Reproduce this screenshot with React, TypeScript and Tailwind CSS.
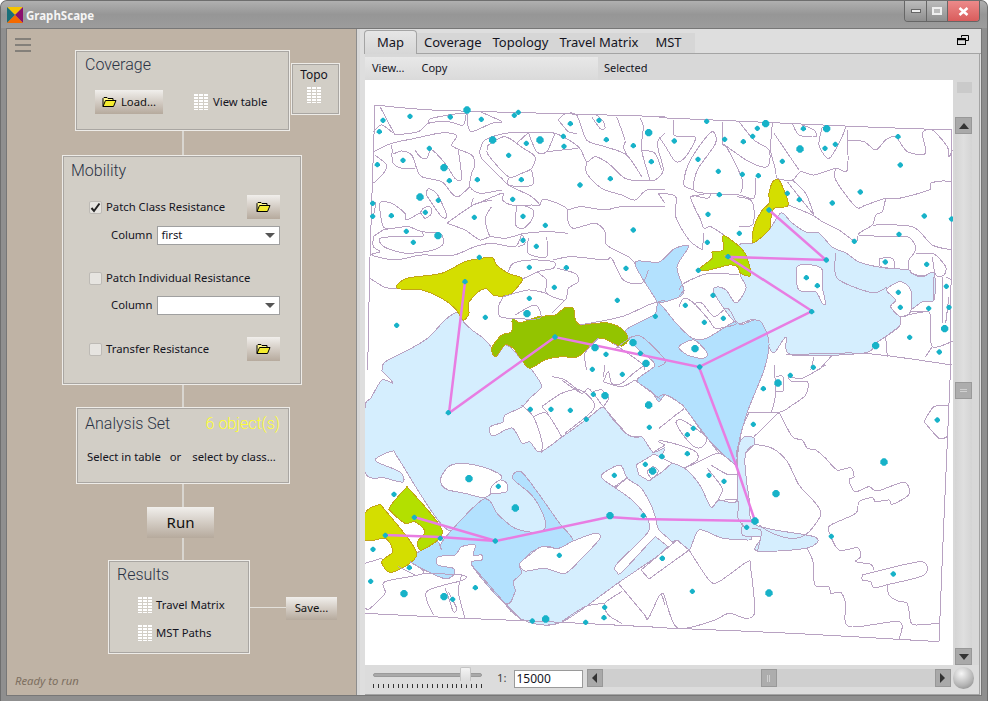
const Z7 = 'translate(366 90) scale(0.33333)'
const Z8 = 'translate(660 90) scale(0.33333)'
const Z9 = 'translate(366 365) scale(0.33333)'
const Z10 = 'translate(660 365) scale(0.33333)'

const lines7 = [
  '30,45 200,60 550,70 900,80', '30,45 22,280 15,500 8,840', '45,50 90,135', '25,125 50,105 85,130',
  '90,135 160,125 190,100 250,95 295,105 305,60', '190,100 200,85 300,70 307,100 320,125 380,100 410,95 345,65',
  '25,185 80,160 150,145 220,130 260,130 275,140 260,165 280,178 320,195 330,225 320,250 315,290 345,310 410,300',
  '80,165 85,190 110,183 140,195 155,235 170,260 230,275 260,310 280,320 315,290', '30,195 65,225 55,250 25,280',
  '80,190 85,220 110,235 150,235', '150,180 165,200 185,205 200,180 240,220 270,265 290,265 280,180',
  '345,180 360,150 420,130 490,128 570,130 640,170 665,215 690,200 730,220 780,265 830,272 870,270 895,240 880,180 880,150 900,130',
  '345,180 350,205 410,265 430,285 500,320 525,345', '368,175 370,195 430,260 470,250 500,235 510,200 475,175 420,140 370,165 368,175',
  '490,128 515,185 545,185 570,130', '455,160 490,128', '545,185 640,175', '430,265 430,285 480,290 505,280 500,240',
  '665,215 665,250 710,295 770,315 810,330 845,300 900,300', '580,90 600,72 635,75 665,150 720,170 785,195 830,260', '580,90 610,125 635,130',
  '755,80 780,150 775,170 785,195', '825,85 835,110 830,180 855,270', '830,180 870,190 890,240', '680,80 705,115 720,115 715,95 695,75',
  '325,325 325,345 410,310 412,330 440,345 500,345 525,345 530,330 550,330 605,355 608,390 625,415 690,400 720,425 725,465 790,500 810,520',
  '608,360 650,350 720,360 770,350 900,350', '880,310 900,340', '245,400 325,345 380,330', '245,400 300,420 345,450 375,440 420,445 460,435 480,430 550,425 610,430',
  '380,350 362,380 365,415 375,440', '455,345 452,405 475,415 500,390 505,360 470,345', '190,295 215,310 245,375 230,380 185,315 190,295',
  '165,370 175,355 195,350 200,370 180,385 165,370 125,390 120,370 80,340 45,340 55,410 85,415',
  '25,440 55,420 85,415 130,410 170,425 225,430 235,460 205,480 130,490 80,480 50,465 45,445 90,440 170,440 170,425',
  '25,440 25,470 45,485 20,495 90,510 170,495 260,497 330,470 380,460 450,470 470,435 480,460 460,470', '490,445 490,490 545,500 545,440',
  '15,565 60,592 95,595', '430,545 445,520 500,510 565,515 565,535 520,545 545,570 545,610 600,630 610,595 640,575 630,550 575,535',
  '565,510 620,500 720,510 740,505 775,570 830,580 850,540', '472,567 520,545', '415,620 400,650 405,680 443,685 525,685 510,645 450,675',
  '415,620 490,600 545,610', '600,630 560,670', '645,705 770,680 850,645 900,630', '790,745 830,740 900,810 880,830', '745,760 830,820 840,840', '745,780 800,740',
  '20,335 32,340 25,380', '700,745 660,790 665,840',
]
const lines8 = [
  '0,83 320,97 600,110 880,120', '878,120 875,840', '0,140 20,170 50,215 80,200 110,145 85,140 45,135 45,90',
  '105,300 75,285 85,230 120,170 160,125 170,160 115,240 105,300 145,310 240,315 285,325 290,265', '190,95 190,160 205,175 250,270 245,310',
  '190,160 270,215 325,230 330,180 285,150 240,95', '340,100 335,180 350,240 355,265 400,270 425,245 465,255 530,235 565,240 565,120',
  '345,130 420,240', '400,100 420,135 470,140 465,120 430,105', '490,110 480,165 510,205 545,150 560,110',
  '565,150 615,155 650,180 680,150 710,140 745,185 800,190 790,130 820,120 865,170 870,200 880,180',
  '530,235 530,270 590,350 620,345 680,325 720,325 810,300 815,280 850,273 880,275',
  '680,325 670,365 650,375 640,405 600,430 590,455 540,420 490,395 460,375 400,350 388,345', '640,405 760,410 820,465 880,480',
  '600,435 680,440 745,440 770,470 765,490 750,510 750,540 775,555 805,555', '770,490 810,490 830,495 860,530 855,555 830,555 820,500',
  '385,275 420,320 465,375', '400,270 440,310 465,375', '0,310 50,320 50,380 90,450 130,480', '95,320 150,310 145,325 95,320 125,390 135,415 155,410 195,435',
  '240,410 280,405 285,360 275,330 235,320', '130,480 135,430', '660,505 700,505 705,535 665,530 660,505', '530,490 535,565 640,608 685,590',
  '825,630 825,560', '850,560 850,700', '860,560 880,570', '870,620 860,700', '725,680 800,665 815,680 820,770 890,750', '755,665 800,665', '680,740 685,800', '680,740 720,710', '820,770 800,800',
  '380,795 615,790 880,825', '465,800 455,840', '520,795 480,840', '60,650 75,625 105,640 150,690 170,715 225,705 230,695 205,655 165,680 130,640 105,640',
  '60,600 75,580 150,550 240,555', '60,620 75,600',
]
const lines9 = [
  '0,745 300,760 590,772 900,788', '470,120 505,155 530,225 530,265', '505,155 545,145 590,215', '530,125 590,85 645,75 685,110 680,140 600,205',
  '550,145 530,125', '590,45 650,85 670,70 700,105 715,125 790,210 830,215', '685,80 710,75 730,100 715,125', '560,35 600,45 650,85',
  '715,50 730,20 740,55 770,55 805,25 840,0', '715,50 770,65 810,45', '810,45 890,105', '720,0 715,35', '880,230 900,240',
  '845,320 865,305 880,320 860,340 845,320', '860,265 900,240',
  '420,715 470,765', '760,655 835,745 850,760 885,690 900,720', '770,680 720,715 730,750 770,775', '590,770 660,725 720,715',
  '135,590 175,625 60,650 60,685 15,730 0,730', '0,595 50,580', '175,625 290,630 295,645 185,680 205,750', '290,630 280,680 300,760', '250,680 275,730 265,740 250,695 240,670',
  '320,600 420,715', '100,605 150,630', '750,370 790,335',
]
const lines10 = [
  '0,788 400,805 840,830', '875,0 855,460 840,830', '345,0 350,85 338,140', '270,142 360,142 400,120 440,90 445,50 400,50 390,35 430,40 500,0', '350,35 372,35 372,78 350,78',
  '270,142 250,190 237,260 232,300', '360,142 285,215',
  '360,142 400,215 430,225 445,250 470,255 500,280 535,315 575,308 585,335 570,345 588,380 630,365 655,378 735,352 750,388 700,418 690,405 650,410 640,398 600,410 590,445 515,480 510,500 540,555 595,548 605,575 590,590 635,598 645,615',
  '610,630 785,590 795,630 690,658 645,668 635,650 610,645 610,630', '685,660 690,690 720,710 745,715 755,770 770,780 840,775',
  '445,550 462,590 468,660 510,665 515,685 545,682 560,715 570,785 720,770 720,825', '795,170 825,125 870,122', '795,170 840,220 865,215',
  '258,265 285,240 340,250 385,290 420,360 470,415 485,450 445,505 400,520 340,505 300,480', '0,95 20,90 75,125 50,150 0,190',
  '50,170 70,165 140,215 130,245 105,245 65,200 50,170', '0,225 60,240 110,260 115,285 75,310 130,285 180,265 230,300', '75,125 180,265', '155,300 205,328 235,328',
  '145,310 190,370 180,405 235,405 237,460 260,490', '90,555 150,645 180,650 265,590 275,610 287,740 260,760 210,745 160,768 55,788 15,690 5,690', '90,555 60,578', '250,475 250,510 280,515', '280,490 305,495 305,520 295,558',
]

const dots7 = {
  big: [[306,60],[165,321],[237,233],[219,437],[383,150],[525,150],[486,671],[851,128],[804,758],[843,820],[690,773]],
  small: [[43,125],[37,224],[114,211],[253,272],[337,269],[431,196],[469,269],[443,328],[474,379],[474,451],[604,533],[616,101],[724,149],[805,167],[859,215],[736,266],[645,285],[597,169],[805,420],[95,706],[783,535],[723,793],[54,91],[135,79],[256,81],[349,88],[448,76],[460,67],[484,160],[595,139],[702,91],[193,175],[220,331],[181,367],[23,340],[23,379],[79,377],[124,424],[145,457],[328,382],[541,406],[514,469],[343,502],[493,532],[568,592],[493,625],[757,631],[871,679],[361,682],[826,790],[300,575],[570,741]],
}
const dots8 = {
  big: [[320,101],[503,116],[423,177],[857,716],[650,767],[108,776]],
  small: [[143,94],[295,115],[433,116],[717,140],[46,153],[197,148],[253,155],[281,139],[529,163],[498,175],[117,208],[370,214],[724,225],[178,244],[250,253],[298,257],[604,306],[181,314],[385,310],[421,329],[520,339],[147,373],[330,360],[796,378],[878,387],[241,430],[720,433],[586,454],[145,457],[207,500],[118,541],[502,510],[679,516],[803,523],[442,563],[475,587],[862,589],[718,607],[162,616],[79,646],[724,652],[809,655],[870,652],[458,665],[136,697],[193,685],[752,742],[841,786]],
}
const dots9 = {
  big: [[720,92],[851,120],[863,318],[312,341],[451,429],[735,452],[117,686],[237,695],[542,762]],
  small: [[682,13],[772,28],[685,88],[496,133],[558,133],[616,136],[664,163],[853,187],[891,275],[841,298],[748,331],[400,364],[87,388],[148,457],[61,511],[226,520],[391,528],[835,452],[583,571],[892,580],[24,553],[133,608],[17,649],[263,703],[331,668],[719,727],[717,758],[502,768],[662,772],[250,143]],
}
const dots10 = {
  big: [[357,54],[675,291],[351,386],[288,468],[330,684]],
  small: [[122,6],[463,7],[394,31],[313,71],[283,178],[835,165],[103,190],[85,209],[85,266],[8,274],[150,331],[195,349],[263,487],[517,514],[10,580],[703,627],[100,679]],
}

// catmull-rom through the hand read points, reference outlines are curvy
const smooth = (pts: string, closed?: boolean) => {
  const p = pts.split(' ').map((s) => s.split(',').map(Number))
  const n = p.length
  const at = (i: number) => (closed ? p[(i + n) % n] : p[Math.max(0, Math.min(n - 1, i))])
  let d = `M${p[0][0]} ${p[0][1]}`
  const k = 1 / 7
  for (let i = 0; i < (closed ? n : n - 1); i++) {
    const a = at(i - 1), b = at(i), c = at(i + 1), e = at(i + 2)
    d += `C${b[0] + (c[0] - a[0]) * k} ${b[1] + (c[1] - a[1]) * k} ${c[0] - (e[0] - b[0]) * k} ${c[1] - (e[1] - b[1]) * k} ${c[0]} ${c[1]}`
  }
  return closed ? d + 'Z' : d
}

const Lines = ({ t, pts }: { t: string, pts: string[] }) => (
  <g transform={t} fill="none" stroke="#b8a2c2" strokeWidth="1" shapeRendering="crispEdges">
    {pts.map((p, i) => <path key={i} d={smooth(p)} vectorEffect="non-scaling-stroke" />)}
  </g>
)

const Area = ({ t, fill, pts, stroke = '#b8a2c2' }: { t?: string, fill: string, pts: string, stroke?: string }) => (
  <path transform={t} d={smooth(pts, true)} fill={fill} stroke={stroke} strokeWidth="1" vectorEffect="non-scaling-stroke" shapeRendering="crispEdges" />
)

const Dots = ({ t, d }: { t: string, d: { big: number[][], small: number[][] } }) => (
  <g transform={t} fill="#17b2c8">
    {d.big.map(([x, y], i) => <path key={i} d={`M${x - 4} ${y - 11}H${x + 4}L${x + 11} ${y - 4}V${y + 4}L${x + 4} ${y + 11}H${x - 4}L${x - 11} ${y + 4}V${y - 4}Z`} />)}
    {d.small.map(([x, y], i) => <path key={i} d={`M${x - 2} ${y - 8}H${x + 2}L${x + 8} ${y - 2}V${y + 2}L${x + 2} ${y + 8}H${x - 2}L${x - 8} ${y + 2}V${y - 2}Z`} />)}
  </g>
)

const MapDrawing = () => (
  <svg width="588" height="585" viewBox="366 80 588 585" className="block">
    <Area fill="#d5eefe" pts="366,408 372,398 383,380 394,383 384,372 383,370 386,362 409,350 429,338 446,320 459,312 463,320 473,330 484,338 493,348 497,357 506,345 514,350 523,360 529,365 541,382 542,388 531,398 523,407 506,415 504,422 491,427 494,436 513,428 523,443 531,442 541,452 563,437 580,425 593,415 604,407 612,417 629,435 643,437 654,452 666,448 660,463 673,463 685,468 693,475 702,487 712,507 720,500 738,500 738,452 745,437 755,438 755,445 747,453 746,465 750,498 757,525 816,537 808,548 758,551 762,538 753,537 750,540 723,538 700,530 690,550 677,540 660,555 619,583 563,622 529,622 506,603 506,565 485,530 446,528 399,458 394,451 379,457 378,462 401,472 404,482 386,478 366,472" />
    <Area fill="#d5eefe" pts="740,245 754,243 770,230 782,213 793,223 807,232 820,233 833,247 847,253 860,262 880,267 910,270 912,273 923,277 935,273 935,300 923,302 912,310 902,317 900,327 877,343 865,353 793,355 787,337 775,353 768,343 755,320 737,323 715,293 718,287 727,290 737,303 747,288 742,277 740,267" />
    <Area fill="#b3e1fe" pts="636,263 660,262 675,249 690,246 678,267 685,290 680,297 660,303 656,298" />
    <Area fill="#b3e1fe" pts="626,332 641,322 656,314 660,303 677,323 693,338 708,338 735,322 742,325 755,320 763,323 770,343 765,370 748,413 738,450 737,465 707,437 685,407 667,395 660,402 653,392 638,380 656,365 640,350" />
    <Area t={Z9} fill="#b3e1fe" pts="442,340 468,320 520,385 580,470 625,527 590,555 550,545 500,560 465,600 470,625 445,650 450,680 420,715 320,600 350,585 350,570 325,570 330,540 290,545 270,570 220,575 218,600 265,610 265,630 235,640 135,590 155,565 215,530 230,555 235,525 355,403 400,450 450,490 510,502 540,490 535,450 500,390" />
    <Area t={Z9} fill="#fff" pts="227,340 250,305 290,295 350,305 400,325 410,340 380,365 378,385 355,398 300,385 250,375 230,360" />
    <Area t={Z9} fill="#fff" pts="380,365 405,345 425,355 425,380 378,385" />
    <Area t={Z9} fill="#fff" pts="465,595 500,565 530,545 580,550 625,528 690,505 705,520 650,580 600,625 540,610 480,618" />
    <Area fill="#fff" pts="602,476 621,465 628,478 642,488 653,507 657,520 660,530 673,542 670,547 658,538 653,540 623,572 618,572 617,565 642,540 650,530 648,518 633,500 615,487" />
    <polyline points="615,487 628,478" fill="none" stroke="#b8a2c2" shapeRendering="crispEdges" />
    <polygon points="642,570 678,540 690,550 650,579" fill="#fff" stroke="#b8a2c2" shapeRendering="crispEdges" />
    <polygon points="637,465 655,454 673,463 663,472 650,481 640,475" fill="#fff" stroke="#b8a2c2" shapeRendering="crispEdges" />
    <Area t={Z8} fill="#fff" pts="415,530 460,525 490,540 490,590 500,640 490,640 470,605 430,605 415,590" />
    <Area t={Z8} fill="#fff" pts="685,595 725,575 755,600 755,665 725,680 695,650 710,630 685,605" />
    <Area t={Z8} fill="#fff" pts="60,770 105,750 145,790 130,805 85,795" />

    <Area t={Z7} fill="#d4de00" stroke="#c2a418" pts="95,595 125,565 230,550 300,515 370,502 385,505 395,525 430,550 472,567 440,610 415,618 385,615 365,597 340,605 310,640 312,670 295,690 270,655 230,625 170,600" />
    <Area t={Z7} fill="#93c400" stroke="#c2a418" pts="380,775 410,735 440,725 442,685 465,698 520,680 570,675 600,653 625,655 630,685 645,705 690,700 735,700 775,720 790,750 770,768 745,760 700,745 640,800 590,800 540,810 495,835 470,810 445,775 420,765 392,800" />
    <Area t={Z8} fill="#d4de00" stroke="#c2a418" pts="330,340 330,310 342,275 362,273 388,345 345,355 335,390 330,420 282,458 285,410 310,360" />
    <Area t={Z8} fill="#b3e000" stroke="#c2a418" pts="193,437 230,460 255,485 268,515 275,557 245,550 235,530 210,525 150,540 120,538 160,505 160,485 192,480" />
    <Area t={Z9} fill="#b3e000" stroke="#c2a418" pts="75,425 120,372 135,375 232,498 170,555 158,530 180,500 150,470 120,475 78,440" />
    <Area t={Z9} fill="#d4de00" stroke="#c2a418" pts="0,445 40,420 60,435 155,565 80,622 50,590 80,565 80,545 60,520 0,525" />

    <Lines t={Z7} pts={lines7} />
    <Lines t={Z8} pts={lines8} />
    <Lines t={Z9} pts={lines9} />
    <Lines t={Z10} pts={lines10} />
    <g fill="none" stroke="#e87de2" strokeWidth="2.5">
      <polyline points="466,282 450,413 556,337 700,367 813,311 729,257 827,260 770,210" />
      <polyline points="700,367 737,465 756,521 640,519 610,517 497,541 415,517" />
      <polyline points="497,541 441,537 386,535" />
    </g>
    <Dots t={Z7} d={dots7} />
    <Dots t={Z8} d={dots8} />
    <Dots t={Z9} d={dots9} />
    <Dots t={Z10} d={dots10} />
  </svg>
)

const FolderIcon = () => (
  <svg width="15" height="12" viewBox="0 0 15 12">
    <path d="M1 10.5V2.5L2 1.5H5L6 2.5H11V4" fill="#fff78a" stroke="#000" strokeWidth="1" />
    <path d="M1 10.5L3.5 4.5H14L11.5 10.5Z" fill="#f4ec30" stroke="#000" strokeWidth="1" />
  </svg>
)

const TableIcon = () => (
  <svg width="14" height="16" viewBox="0 0 14 16" className="shrink-0">
    <rect width="14" height="16" fill="#fff" />
    <path d="M4.5 0V16M9.5 0V16" stroke="#d2cec6" strokeWidth="1" />
    <path d="M0 2.5H14M0 5.5H14M0 8.5H14M0 11.5H14M0 14.5H14" stroke="#d2cec6" strokeWidth="1" />
  </svg>
)

const btn = 'flex items-center justify-center bg-gradient-to-b from-[#f1efec] to-[#b6aa9d] text-[#111]'
const panel = 'bg-[#d2cec6] border border-[#eeece8] shadow-[inset_0_0_0_1px_#a9a6a2]'
const heading = "font-['Roboto',sans-serif] font-light text-[16px] leading-[22px] text-[#2b3345]"

const Connector = ({ h }: { h: string }) => (
  <div className={`ml-[174.5px] w-[2px] bg-[#d9d6d0] ${h}`} />
)

const CheckBox = ({ checked }: { checked?: boolean }) => (
  <div className="w-[13px] h-[13px] rounded-[2px] border border-[#bdbab5] bg-[#e6e4e0] flex items-center justify-center">
    {checked && (
      <svg width="11" height="11" viewBox="0 0 11 11">
        <path d="M1.5 6L4 9L9.5 1.5" fill="none" stroke="#222" strokeWidth="2" />
      </svg>
    )}
  </div>
)

const Combo = ({ value }: { value?: string }) => (
  <div className="w-[123px] h-[19px] bg-white border border-[#a0a0a0] flex items-center justify-between pl-[3px] pr-[4px]">
    <span>{value}</span>
    <span className="w-0 h-0 border-l-[5px] border-r-[5px] border-t-[5px] border-l-transparent border-r-transparent border-t-[#555]" />
  </div>
)

const ScrollBtn = ({ dir, className }: { dir: 'up' | 'down' | 'left' | 'right', className: string }) => (
  <div className={`flex items-center justify-center bg-[#a9a9a9] border border-[#989898] ${className}`}>
    {dir === 'up' && <span className="w-0 h-0 border-l-[5px] border-r-[5px] border-b-[6px] border-l-transparent border-r-transparent border-b-[#333]" />}
    {dir === 'down' && <span className="w-0 h-0 border-l-[5px] border-r-[5px] border-t-[6px] border-l-transparent border-r-transparent border-t-[#333]" />}
    {dir === 'left' && <span className="w-0 h-0 border-t-[5px] border-b-[5px] border-r-[5px] border-t-transparent border-b-transparent border-r-[#333]" />}
    {dir === 'right' && <span className="w-0 h-0 border-t-[5px] border-b-[5px] border-l-[5px] border-t-transparent border-b-transparent border-l-[#333]" />}
  </div>
)

const App = () => {
  return (
    <div className="w-[988px] h-[701px] flex flex-col bg-white text-[11.3px] text-[#14141e] font-['Noto_Sans',sans-serif] overflow-hidden">
      <div className="flex-1 flex flex-col rounded-t-[7px] border border-[#6e6e6e] border-b-0 bg-[#8f8f8f] min-h-0">
        <div className="h-[27px] shrink-0 flex items-start rounded-t-[6px] bg-gradient-to-b from-[#b0b0b0] via-[#969696] to-[#9c9c9c]">
          <svg width="16" height="16" viewBox="0 0 16 16" className="mt-[6px] ml-[6px]">
            <polygon points="0,0 16,0 8,8" fill="#f5c400" />
            <polygon points="0,0 0,16 8,8" fill="#1a6f78" />
            <polygon points="16,0 16,16 8,8" fill="#8b0f6e" />
            <polygon points="0,16 16,16 8,8" fill="#f46a00" />
          </svg>
          <span className="ml-[3px] mt-[6px] text-[11.5px] font-bold text-white/90">GraphScape</span>
          <div className="ml-auto mr-[7px] flex h-[21px] rounded-b-[4px] border border-t-0 border-[#666] overflow-hidden">
            <div className="w-[22px] flex items-center justify-center bg-gradient-to-b from-[#bcbcbc] to-[#8f8f8f] border-r border-[#666]">
              <span className="w-[10px] h-[4px] bg-[#eee] border border-[#666]" />
            </div>
            <div className="w-[21px] flex items-center justify-center bg-gradient-to-b from-[#bcbcbc] to-[#8f8f8f] border-r border-[#666]">
              <span className="w-[10px] h-[8px] bg-[#bbb] border-2 border-[#eee]" />
            </div>
            <div className="w-[31px] flex items-center justify-center bg-gradient-to-b from-[#ec8a8a] to-[#d95c5c]">
              <svg width="11" height="9" viewBox="0 0 11 9">
                <path d="M1.5 1L9.5 8M9.5 1L1.5 8" stroke="#fff" strokeWidth="2.6" />
              </svg>
            </div>
          </div>
        </div>

        <div className="flex-1 flex mx-[5px] mb-[5px] border border-[#777] min-h-0">
          <div className="relative w-[349px] shrink-0 flex flex-col pt-[21px] bg-[#bfb3a5]">
            <div className="absolute left-[8px] top-[9px] w-[16px] h-[14px] flex flex-col justify-between">
              <span className="h-[2px] bg-[#84807a]" />
              <span className="h-[2px] bg-[#84807a]" />
              <span className="h-[2px] bg-[#84807a]" />
            </div>

            <div className="flex items-start ml-[68px]">
              <div className={`${panel} w-[215px] h-[81px] flex flex-col pl-[9px] pt-[3px]`}>
                <div className={heading}>Coverage</div>
                <div className="flex items-center mt-[14px] ml-[10px]">
                  <div className={`${btn} w-[68px] h-[24px] gap-[4px]`}><FolderIcon />Load...</div>
                  <div className="ml-[31px]"><TableIcon /></div>
                  <span className="ml-[5px]">View table</span>
                </div>
              </div>
              <div className={`${panel} w-[49px] h-[52px] mt-[13px] ml-[1px] flex flex-col items-center pt-[2px] pr-[3px] gap-[3px] text-[12px]`}>
                Topo
                <TableIcon />
              </div>
            </div>
            <Connector h="h-[24px]" />

            <div className={`${panel} ml-[55px] w-[240px] h-[230px] flex flex-col pl-[8px] pt-[4px]`}>
              <div className={heading}>Mobility</div>
              <div className="flex items-center h-[24px] mt-[13px] ml-[18px]">
                <CheckBox checked />
                <span className="ml-[4px]">Patch Class Resistance</span>
                <div className={`${btn} w-[33px] h-[24px] ml-auto mr-[21px]`}><FolderIcon /></div>
              </div>
              <div className="flex items-center mt-[7px] ml-[40px] gap-[5px]">
                Column
                <Combo value="first" />
              </div>
              <div className="flex items-center h-[20px] mt-[23px] ml-[18px]">
                <CheckBox />
                <span className="ml-[4px]">Patch Individual Resistance</span>
              </div>
              <div className="flex items-center mt-[8px] ml-[40px] gap-[5px]">
                Column
                <Combo />
              </div>
              <div className="flex items-center h-[24px] mt-[22px] ml-[18px]">
                <CheckBox />
                <span className="ml-[4px]">Transfer Resistance</span>
                <div className={`${btn} w-[33px] h-[24px] ml-auto mr-[21px]`}><FolderIcon /></div>
              </div>
            </div>
            <Connector h="h-[22px]" />

            <div className={`${panel} ml-[69px] w-[214px] h-[77px] flex flex-col pl-[8px] pr-[9px] pt-[5px]`}>
              <div className="flex justify-between">
                <div className={heading}>Analysis Set</div>
                <div className="font-['Roboto',sans-serif] font-light text-[16px] leading-[22px] text-[#ffff33]">6 object(s)</div>
              </div>
              <div className="flex mt-[14px] ml-[2px]">
                <span>Select in table</span>
                <span className="ml-[9px]">or</span>
                <span className="ml-[11px]">select by class...</span>
              </div>
            </div>
            <Connector h="h-[23px]" />

            <div className={`${btn} ml-[140px] w-[67px] h-[31px] text-[15px]`}>Run</div>
            <Connector h="h-[22px]" />

            <div className="flex items-start ml-[101px]">
              <div className={`${panel} w-[142px] h-[94px] flex flex-col pl-[8px] pt-[3px]`}>
                <div className={heading}>Results</div>
                <div className="flex items-center gap-[4px] ml-[21px] mt-[11px]"><TableIcon />Travel Matrix</div>
                <div className="flex items-center gap-[4px] ml-[21px] mt-[11px]"><TableIcon />MST Paths</div>
              </div>
              <div className="w-[36px] h-[1px] mt-[47px] bg-[#e3e0da]" />
              <div className={`${btn} w-[51px] h-[23px] mt-[37px]`}>Save...</div>
            </div>

            <div className="mt-auto pb-[5px] pl-[8px] italic text-[#7d6f60]">Ready to run</div>
          </div>

          <div className="w-[4px] shrink-0 bg-[#d8d8d8] border-l border-[#8d8d8d]" />

          <div className="flex-1 flex flex-col min-w-0 bg-[#dedede]">
            <div className="h-[25px] shrink-0 flex items-end pl-[4px]">
              <div className="w-[53px] h-[24px] flex items-center justify-center rounded-t-[4px] border border-b-0 border-[#a4a4a4] bg-gradient-to-b from-[#e6e6e6] to-[#d6d6d6] text-[13px]">Map</div>
              <div className="w-[278px] h-[21px] flex items-center bg-[#d6d6d6] text-[13px] border-b border-[#a4a4a4]">
                <span className="ml-[7px]">Coverage</span>
                <span className="ml-[11px]">Topology</span>
                <span className="ml-[11px]">Travel Matrix</span>
                <span className="ml-[17px]">MST</span>
              </div>
              <div className="flex-1 h-[21px] flex items-start justify-end border-b border-[#a4a4a4]">
                <svg width="12" height="10" viewBox="0 0 12 10" className="mr-[12px] mt-[2px]">
                  <path d="M4.5 2.5V.5H11.5V5.5H9" fill="none" stroke="#000" />
                  <rect x=".5" y="3.5" width="8" height="6" fill="none" stroke="#000" />
                  <path d="M1 4.5H8" stroke="#000" strokeWidth="1.5" />
                </svg>
              </div>
            </div>
            <div className="flex-1 flex flex-col ml-[5px] mr-[1px] min-h-0 bg-[#d8d8d8] border-r border-[#a4a4a4] border-b">
              <div className="h-[26px] shrink-0 flex items-end">
                <div className="w-[233px] h-[23px] flex items-center bg-gradient-to-b from-[#e8e8e8] to-[#dadada] text-[11px]">
                  <span className="ml-[7px]">View...</span>
                  <span className="ml-[17px]">Copy</span>
                </div>
                <span className="ml-[6px] mb-[4px] text-[11px]">Selected</span>
              </div>
              <div className="flex shrink-0">
                <div className="w-[588px] h-[585px] bg-white"><MapDrawing /></div>
                <div className="flex-1 flex flex-col items-start pl-[2px] pt-[2px]">
                  <div className="ml-[2px] w-[15px] h-[11px] bg-[#cacaca]" />
                  <ScrollBtn dir="up" className="mt-[24px] w-[17px] h-[17px]" />
                  <div className="w-[17px] flex-1 flex flex-col bg-gradient-to-r from-[#d4d4d4] via-[#dfdfdf] to-[#d4d4d4]">
                    <div className="mt-[248px] w-[17px] h-[17px] bg-[#adadad] border border-[#999] flex items-center justify-center">
                      <span className="w-[7px] h-[3px] border-y border-[#d0d0d0]" />
                    </div>
                  </div>
                  <ScrollBtn dir="down" className="w-[17px] h-[17px]" />
                </div>
              </div>
              <div className="flex-1 flex items-start pt-[2px] pl-[8px] bg-[#dcdcdc]">
                <div className="relative w-[109px] h-[24px]">
                  <div className="mt-[6px] h-[4px] rounded-full bg-[#a9a9a9] border border-[#9a9a9a]" />
                  <div className="mt-[7px] flex justify-between">
                    {Array.from({ length: 23 }).map((_, i) => (
                      <span key={i} className="w-px h-[4px] bg-[#333]" />
                    ))}
                  </div>
                  <div className="absolute left-[87px] top-0 w-[11px] h-[14px] bg-gradient-to-b from-[#f4f4f4] to-[#dcdcdc] rounded-t-[2px] border border-[#c4c4c4] border-b-0" />
                  <div className="absolute left-[87px] top-[14px] w-0 h-0 border-l-[5.5px] border-r-[5.5px] border-t-[5px] border-l-transparent border-r-transparent border-t-[#dcdcdc]" />
                </div>
                <span className="ml-[15px] mt-[3px] text-[#444]">1:</span>
                <div className="ml-[7px] mt-[3px] w-[69px] h-[18px] border border-[#9a9a9a] bg-white flex items-center pl-[2px] text-[12px] leading-none">15000</div>
                <div className="ml-[4px] mt-[2px] w-[364px] h-[18px] flex bg-[#cfcfcf]">
                  <ScrollBtn dir="left" className="w-[16px] h-[18px]" />
                  <div className="ml-[158px] w-[16px] h-[18px] bg-[#adadad] border border-[#999] flex items-center justify-center">
                    <span className="w-[3px] h-[7px] border-x border-[#d0d0d0]" />
                  </div>
                  <ScrollBtn dir="right" className="ml-auto w-[16px] h-[18px]" />
                </div>
                <div className="ml-[2px] w-[21px] h-[22px] rounded-full bg-[radial-gradient(circle_at_40%_30%,#f6f6f6,#b4b4b4_60%,#7c7c7c)]" />
              </div>
            </div>
          </div>
        </div>
      </div>
    </div>
  )
}

export default App
